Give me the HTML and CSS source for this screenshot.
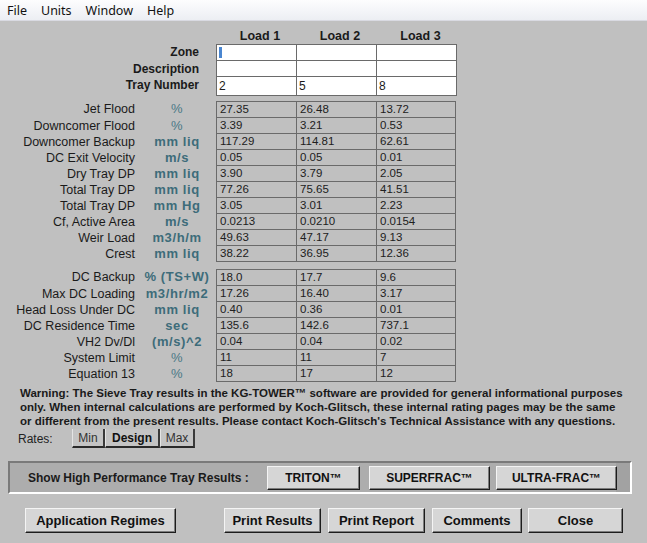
FILE: index.html
```html
<!DOCTYPE html>
<html>
  <head>
    <title>Sieve Tray Results</title>
    <link rel="stylesheet" href="styles.css">
  </head>
  <body>
    <div class="menubar">
      <span>File</span>
      <span>Units</span>
      <span>Window</span>
      <span>Help</span>
    </div>

    <section class="window">
      <div class="loads">
        <span></span>
        <span>Load 1</span>
        <span>Load 2</span>
        <span>Load 3</span>
      </div>

      <div class="inputs">
        <div class="irow">
          <span class="ilbl">Zone</span>
          <span class="in"><i class="caret"></i></span>
          <span class="in"></span>
          <span class="in"></span>
        </div>
        <div class="irow">
          <span class="ilbl">Description</span>
          <span class="in"></span>
          <span class="in"></span>
          <span class="in"></span>
        </div>
        <div class="irow tall">
          <span class="ilbl">Tray Number</span>
          <span class="in">2</span>
          <span class="in">5</span>
          <span class="in">8</span>
        </div>
      </div>

      <div class="results">
        <div class="row"><span class="lbl">Jet Flood</span><span class="unit thin">%</span><span class="v">27.35</span><span class="v">26.48</span><span class="v">13.72</span></div>
        <div class="row"><span class="lbl">Downcomer Flood</span><span class="unit thin">%</span><span class="v">3.39</span><span class="v">3.21</span><span class="v">0.53</span></div>
        <div class="row"><span class="lbl">Downcomer Backup</span><span class="unit">mm liq</span><span class="v">117.29</span><span class="v">114.81</span><span class="v">62.61</span></div>
        <div class="row"><span class="lbl">DC Exit Velocity</span><span class="unit">m/s</span><span class="v">0.05</span><span class="v">0.05</span><span class="v">0.01</span></div>
        <div class="row"><span class="lbl">Dry Tray DP</span><span class="unit">mm liq</span><span class="v">3.90</span><span class="v">3.79</span><span class="v">2.05</span></div>
        <div class="row"><span class="lbl">Total Tray DP</span><span class="unit">mm liq</span><span class="v">77.26</span><span class="v">75.65</span><span class="v">41.51</span></div>
        <div class="row"><span class="lbl">Total Tray DP</span><span class="unit">mm Hg</span><span class="v">3.05</span><span class="v">3.01</span><span class="v">2.23</span></div>
        <div class="row"><span class="lbl">Cf, Active Area</span><span class="unit">m/s</span><span class="v">0.0213</span><span class="v">0.0210</span><span class="v">0.0154</span></div>
        <div class="row"><span class="lbl">Weir Load</span><span class="unit">m3/h/m</span><span class="v">49.63</span><span class="v">47.17</span><span class="v">9.13</span></div>
        <div class="row"><span class="lbl">Crest</span><span class="unit">mm liq</span><span class="v">38.22</span><span class="v">36.95</span><span class="v">12.36</span></div>
      </div>

      <div class="results second">
        <div class="row"><span class="lbl">DC Backup</span><span class="unit">% (TS+W)</span><span class="v">18.0</span><span class="v">17.7</span><span class="v">9.6</span></div>
        <div class="row"><span class="lbl">Max DC Loading</span><span class="unit">m3/hr/m2</span><span class="v">17.26</span><span class="v">16.40</span><span class="v">3.17</span></div>
        <div class="row"><span class="lbl">Head Loss Under DC</span><span class="unit">mm liq</span><span class="v">0.40</span><span class="v">0.36</span><span class="v">0.01</span></div>
        <div class="row"><span class="lbl">DC Residence Time</span><span class="unit">sec</span><span class="v">135.6</span><span class="v">142.6</span><span class="v">737.1</span></div>
        <div class="row"><span class="lbl">VH2 Dv/Dl</span><span class="unit">(m/s)^2</span><span class="v">0.04</span><span class="v">0.04</span><span class="v">0.02</span></div>
        <div class="row"><span class="lbl">System Limit</span><span class="unit thin">%</span><span class="v">11</span><span class="v">11</span><span class="v">7</span></div>
        <div class="row"><span class="lbl">Equation 13</span><span class="unit thin">%</span><span class="v">18</span><span class="v">17</span><span class="v">12</span></div>
      </div>

      <p class="warning">
        Warning: The Sieve Tray results in the KG-TOWER&trade; software are provided for general informational purposes<br>
        only. When internal calculations are performed by Koch-Glitsch, these internal rating pages may be the same<br>
        or different from the present results. Please contact Koch-Glitsch's Technical Assistance with any questions.
      </p>

      <div class="rates">
        <span class="rates_lbl">Rates:</span>
        <div class="seg">
          <button class="seg_btn min">Min</button>
          <button class="seg_btn design">Design</button>
          <button class="seg_btn max">Max</button>
        </div>
      </div>

      <div class="hp_panel">
        <span class="hp_lbl">Show High Performance Tray Results :</span>
        <button class="btn triton">TRITON&trade;</button>
        <button class="btn superfrac">SUPERFRAC&trade;</button>
        <button class="btn ultrafrac">ULTRA-FRAC&trade;</button>
      </div>

      <div class="actions">
        <button class="btn big regimes">Application Regimes</button>
        <div class="right_group">
          <button class="btn big print_results">Print Results</button>
          <button class="btn big print_report">Print Report</button>
          <button class="btn big comments">Comments</button>
          <button class="btn big close">Close</button>
        </div>
      </div>
    </section>
  </body>
</html>
```

FILE: styles.css
```css
/* classic grey dialog look */
* {
  box-sizing: border-box;
}

body {
  margin: 0;
  width: 647px;
  height: 543px;
  background-color: #c0c0c0;
  font-family: "Liberation Sans", Arial, sans-serif;
  color: #1a1a1a;
  overflow: hidden;
}

.menubar {
  height: 21px;
  display: flex;
  align-items: center;
  background: linear-gradient(#fdfdfe, #eceef3);
  border-bottom: 1px solid #d9dae2;
  font-family: "Noto Sans", sans-serif;
  font-size: 12.5px;
  color: #111;
}
.menubar span {
  padding: 0 7px;
}

.window {
  height: 522px;
  border-bottom: 1px solid #6e6e6e;
}

/* column headers + input grid */
.loads,
.irow {
  display: grid;
  grid-template-columns: 216px 80px 80px 81px;
}
.loads {
  margin-top: 7px;
  height: 16px;
  line-height: 16px;
  font-size: 12.5px;
  font-weight: bold;
}
.loads span {
  text-align: center;
  padding-left: 8px;
}

.ilbl {
  text-align: right;
  padding-right: 17px;
  font-size: 12px;
  font-weight: bold;
  line-height: 16px;
}
.in {
  background-color: #fff;
  border-left: 1px solid #6a6a6a;
  border-bottom: 1px solid #6a6a6a;
  height: 16px;
  padding-left: 2px;
  font-size: 12px;
  line-height: 15px;
}
.irow .in:last-child {
  border-right: 1px solid #6a6a6a;
}
.irow:first-child .in {
  border-top: 1px solid #6a6a6a;
  height: 17px;
}
.irow.tall .in {
  height: 19px;
  line-height: 18px;
}
.irow.tall .ilbl {
  line-height: 17px;
}
.caret {
  display: inline-block;
  width: 3px;
  height: 11px;
  margin-top: 2px;
  vertical-align: top;
  background-color: #4a86d0;
}

/* result tables */
.results {
  margin-top: 5px;
}
.results.second {
  margin-top: 7px;
}
.row {
  display: grid;
  grid-template-columns: 136px 80px 80px 80px 80px;
  height: 16px;
}
.row:first-child {
  height: 17px;
}
.lbl {
  text-align: right;
  padding-right: 1px;
  font-size: 12.5px;
  line-height: 16px;
}
.unit {
  text-align: center;
  font-size: 13px;
  font-weight: bold;
  letter-spacing: 0.6px;
  line-height: 16px;
  color: #3d6c7a;
  padding-left: 2px;
}
.unit.thin {
  font-weight: normal;
  color: #4b7886;
}
.v {
  border-left: 1px solid #6a6a6a;
  border-bottom: 1px solid #6a6a6a;
  font-size: 11.5px;
  line-height: 15px;
  padding-left: 3px;
  color: #202020;
}
.row .v:last-child {
  border-right: 1px solid #6a6a6a;
}
.row:first-child .v {
  border-top: 1px solid #6a6a6a;
}

.warning {
  margin: 4px 0 0 20px;
  font-size: 11.5px;
  font-weight: bold;
  line-height: 14px;
  white-space: nowrap;
  color: #1a1a1a;
}

/* rates selector */
.rates {
  display: flex;
  align-items: center;
  margin-top: 1px;
  height: 19px;
}
.rates_lbl {
  width: 72px;
  padding-left: 18px;
  font-size: 12px;
  color: #222;
}
.seg {
  display: flex;
  height: 19px;
}
.seg_btn {
  font-family: inherit;
  font-size: 12px;
  color: #333;
  background-color: #c4c4c4;
  border: 0;
  border-left: 1px solid #e4e4e4;
  border-right: 2px solid #3a3a3a;
  border-bottom: 2px solid #2a2a2a;
  padding: 0;
  height: 19px;
}
.seg_btn.min {
  width: 33px;
}
.seg_btn.design {
  width: 55px;
  font-weight: bold;
  color: #111;
}
.seg_btn.max {
  width: 35px;
}

/* classic raised button */
.btn {
  font-family: inherit;
  font-weight: bold;
  font-size: 12px;
  color: #111;
  background-color: #d6d6d6;
  border: 1px solid;
  border-color: #f4f4f4 #1c1c1c #1c1c1c #f4f4f4;
  box-shadow: inset -1px -1px #7c7c7c;
  padding: 0;
  height: 24px;
}

.hp_panel {
  display: flex;
  align-items: flex-start;
  margin: 13px 0 0 8px;
  width: 624px;
  height: 33px;
  padding-top: 3px;
  background: linear-gradient(to right, #adadad 606px, #a2a2a2 606px);
  border: 2px solid;
  border-color: #7a7a7a #ffffff #ffffff #7a7a7a;
}
.hp_lbl {
  width: 257px;
  padding-left: 18px;
  font-size: 12px;
  font-weight: bold;
  line-height: 24px;
  color: #1a1a1a;
}
.triton {
  width: 93px;
}
.superfrac {
  width: 121px;
  margin-left: 9px;
}
.ultrafrac {
  width: 121px;
  margin-left: 6px;
}

.actions {
  display: flex;
  margin-top: 14px;
  padding-left: 25px;
}
.btn.big {
  font-size: 13px;
  height: 25px;
}
.regimes {
  width: 151px;
  margin-right: 48px;
}
.right_group {
  display: flex;
  gap: 7px;
}
.print_results {
  width: 97px;
}
.print_report {
  width: 97px;
}
.comments {
  width: 90px;
}
.close {
  width: 95px;
  margin-left: -1px;
}
```
